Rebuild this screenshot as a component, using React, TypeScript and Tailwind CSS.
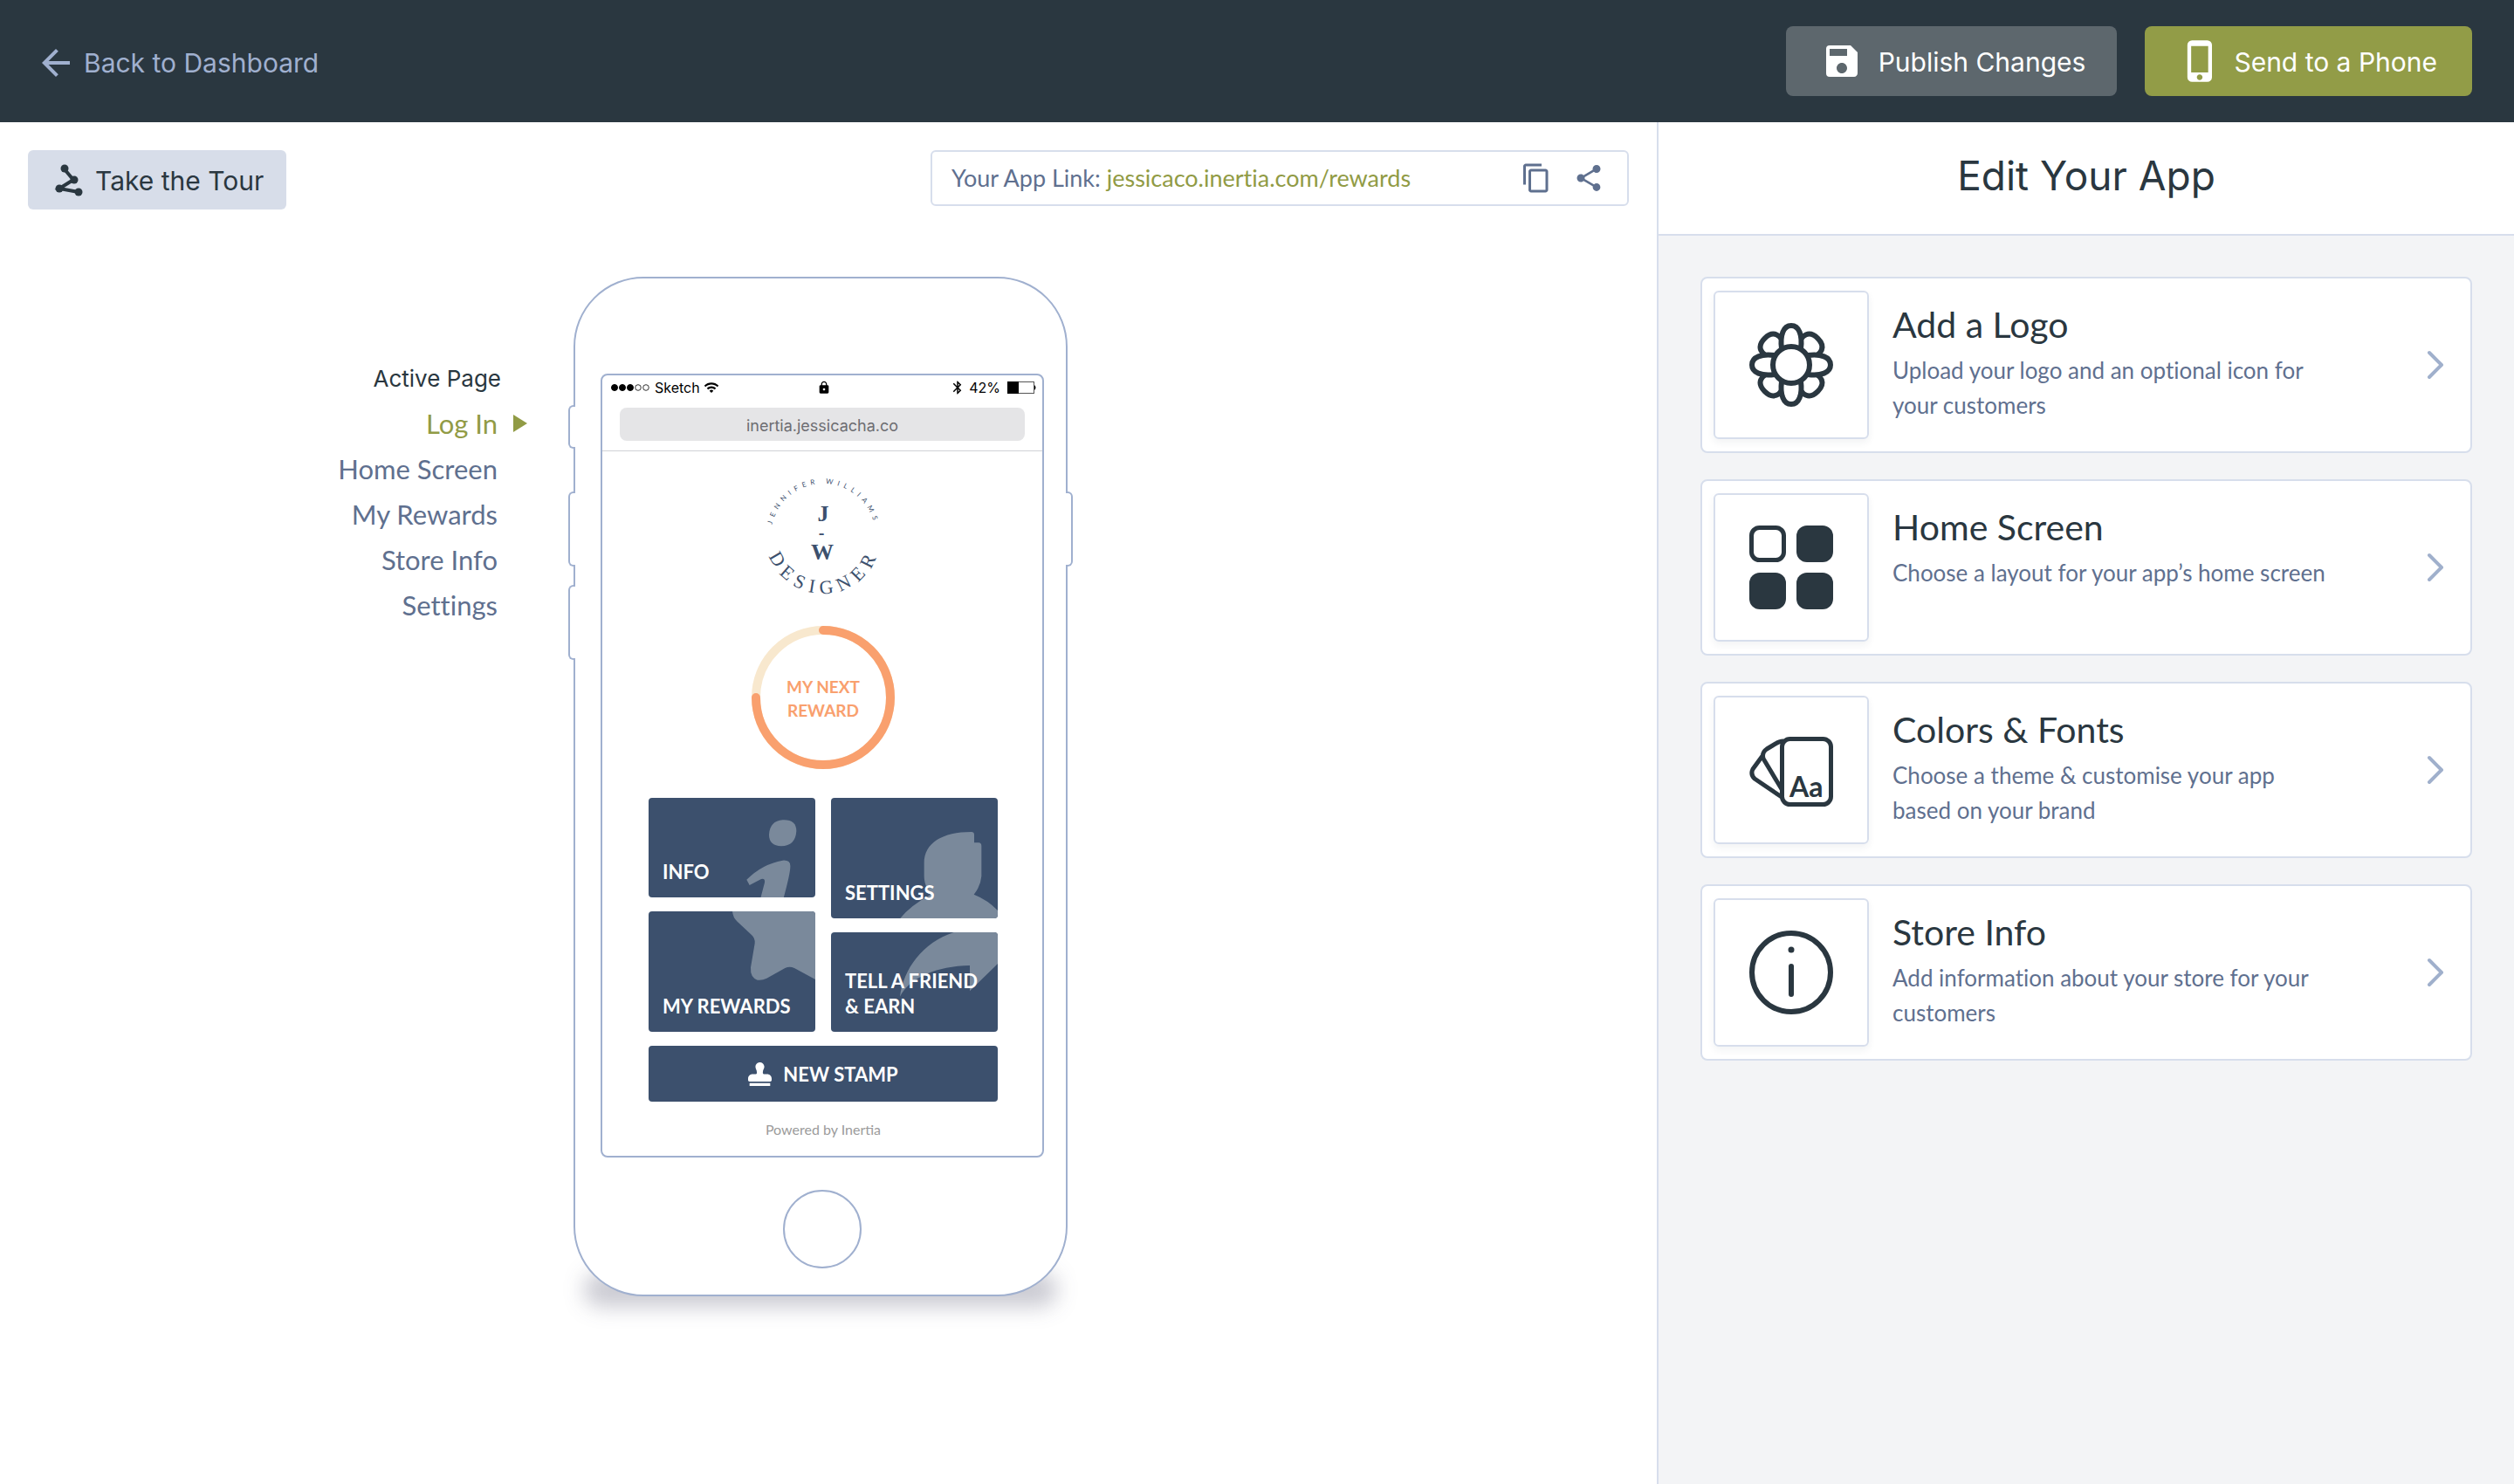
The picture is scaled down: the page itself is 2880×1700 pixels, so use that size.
import React from 'react';
import { MdArrowBack, MdSave, MdPhoneIphone, MdContentCopy, MdShare, MdLock, MdWifi, MdBluetooth } from 'react-icons/md';
import { FaStamp } from 'react-icons/fa';

const inter = "font-['Inter','Liberation_Sans',sans-serif]";
const lato = "font-['Lato','Open_Sans',sans-serif]";

function TourIcon() {
  return (
    <svg viewBox="0 0 34 38" className="h-[38px] w-[34px]" fill="#2a3740" stroke="#2a3740" aria-hidden="true">
      <path d="M12 7 L22 19 L6 29 L28 33" fill="none" strokeWidth="4" />
      <g stroke="none">
        <circle cx="12" cy="6" r="4.500" />
        <circle cx="23" cy="19" r="4.500" />
        <circle cx="6" cy="29" r="4.500" />
        <circle cx="28" cy="33" r="4.500" />
      </g>
    </svg>
  );
}

function FlowerIcon() {
  return (
    <svg viewBox="-50 -50 100 100" className="size-[100px]" fill="#fff" stroke="#2a3740" strokeWidth="6" aria-hidden="true">
      {[45, 135, 225, 315].map((a) => (
        <path key={a} d="M-10 -20 C-17 -34 -13 -43 0 -43 C13 -43 17 -34 10 -20" transform={`rotate(${a})`} />
      ))}
      {[0, 90, 180, 270].map((a) => (
        <path key={a} d="M-11 -19 C-13 -34 -9 -45 0 -45 C9 -45 13 -34 11 -19" transform={`rotate(${a})`} />
      ))}
      <circle r="21" />
    </svg>
  );
}

function LayoutIcon() {
  return (
    <svg viewBox="0 0 96 96" className="size-[96px]" fill="#2a3740" aria-hidden="true">
      <rect x="2.5" y="2.5" width="37" height="37" rx="9" fill="#fff" stroke="#2a3740" strokeWidth="5" />
      <rect x="54" width="42" height="42" rx="12" />
      <rect y="54" width="42" height="42" rx="12" />
      <rect x="54" y="54" width="42" height="42" rx="12" />
    </svg>
  );
}

function SwatchIcon() {
  return (
    <svg viewBox="0 -4 96 84" className="h-[84px] w-[96px]" fill="#fff" stroke="#2a3740" strokeWidth="5" strokeLinejoin="round" aria-hidden="true">
      <path d="M15 22 L4 37 Q1 43 6 48 L37 69" />
      <path d="M39 5 Q34 5 30 8 L20 14 Q14 18 16 25 L37 60" />
      <rect x="37.500" y="2.500" width="56" height="75" rx="9" />
      <text x="46" y="69" fontSize="32" fontWeight="700" fill="#2a3740" stroke="none" fontFamily="Lato, sans-serif">Aa</text>
    </svg>
  );
}

function InfoIcon() {
  return (
    <svg viewBox="0 0 96 96" className="size-[96px]" fill="none" stroke="#2a3740" strokeWidth="6" strokeLinecap="round" aria-hidden="true">
      <circle cx="48" cy="48" r="45" />
      <path d="M48 41 V73" />
      <circle cx="48" cy="22" r="3.500" fill="#2a3740" stroke="none" />
    </svg>
  );
}

function Chevron() {
  return (
    <svg viewBox="0 0 20 34" className="h-[34px] w-5 shrink-0" fill="none" stroke="#a0b0cc" strokeWidth="4" strokeLinecap="round" strokeLinejoin="round" aria-hidden="true">
      <path d="M3 3 L17 17 L3 31" />
    </svg>
  );
}

function BrandLogo() {
  return (
    <svg viewBox="-70 -70 140 140" className="size-[140px] overflow-visible" fill="#3c506d" role="img" aria-label="Jennifer Williams Designer">
      <defs>
        <path id="logo-top" d="M-60 0 A60 60 0 0 1 60 0" />
        <path id="logo-bottom" d="M-66 0 A66 66 0 0 0 66 0" />
      </defs>
      <text fontSize="8" letterSpacing="5" textAnchor="middle" fontFamily="Lato, sans-serif">
        <textPath href="#logo-top" startOffset="50%">JENNIFER WILLIAMS</textPath>
      </text>
      <text fontSize="22" letterSpacing="7" textAnchor="middle" fontFamily="Liberation Serif, serif">
        <textPath href="#logo-bottom" startOffset="51%">DESIGNER</textPath>
      </text>
      <text fontFamily="Liberation Serif, serif" fontWeight="700" fontSize="26" textAnchor="middle">
        <tspan x="0" y="-17">J</tspan>
        <tspan x="-2" y="3" fontSize="20">-</tspan>
        <tspan x="-1" y="27">W</tspan>
      </text>
    </svg>
  );
}

function RewardRing() {
  return (
    <div className="relative grid size-[164px] place-items-center">
      <svg viewBox="0 0 164 164" className="absolute inset-0 size-full" fill="none" strokeWidth="10" aria-hidden="true">
        <circle cx="82" cy="82" r="77" stroke="#f8e8ce" />
        <path d="M82 5 A77 77 0 1 1 5 82" stroke="#f9a06e" strokeLinecap="round" />
      </svg>
      <p className="relative pt-0.5 text-center text-[19px] leading-[27px] font-bold text-[#f9a06e]">
        MY NEXT
        <br />
        REWARD
      </p>
    </div>
  );
}

type TileProps = { label: React.ReactNode; viewBox: string; tall?: boolean; children: React.ReactNode };

function Tile({ label, viewBox, tall, children }: TileProps) {
  return (
    <button
      type="button"
      className={`relative flex w-full items-end overflow-hidden rounded bg-[#3c506d] px-4 pb-[15px] text-left text-[22px] leading-[29px] font-bold text-white ${tall ? 'h-[138px]' : 'h-[114px]'}`}
    >
      <svg viewBox={viewBox} className="absolute inset-0 size-full" fill="#7a899b" aria-hidden="true">
        {children}
      </svg>
      <span className="relative">{label}</span>
    </button>
  );
}

function StatusBar() {
  return (
    <div className={`grid grid-cols-3 items-center pt-0.5 pr-1.5 pl-[9px] text-[16px] leading-6 text-black ${inter}`}>
      <div className="flex items-center gap-1">
        <svg viewBox="0 0 47 10" className="h-[10px] w-[47px]" stroke="#000" aria-hidden="true">
          {[0, 1, 2, 3, 4].map((i) => (
            <circle key={i} cx={5 + i * 9} cy="5" r={i < 3 ? 3.5 : 3.3} fill={i < 3 ? '#000' : 'none'} strokeWidth={i < 3 ? 1 : 0.8} />
          ))}
        </svg>
        <span>Sketch</span>
        <MdWifi className="size-[18px]" />
      </div>
      <MdLock className="size-4 justify-self-center" />
      <div className="flex items-center justify-end gap-1">
        <MdBluetooth className="size-[18px]" />
        <span>42%</span>
        <svg viewBox="0 0 34 14" className="ml-1 h-[14px] w-[34px]" aria-hidden="true">
          <rect x="0.500" y="0.500" width="30" height="13" fill="none" stroke="#555" />
          <rect width="13" height="14" />
          <path d="M31 4 Q34 7 31 10 Z" />
        </svg>
      </div>
    </div>
  );
}

function SideButton({ className }: { className: string }) {
  return <span className={`absolute w-2 border-2 border-[#a0b0cf] bg-white ${className}`} />;
}

function Phone() {
  return (
    <div className="relative w-[566px] shrink-0">
      <div className="absolute inset-x-3 -bottom-3 h-10 rounded-[20px] bg-[#2a2a4a]/25 blur-[12px]" />
      <div className="relative flex flex-col items-center rounded-[80px] border-2 border-[#a0b0cf] bg-white pt-[109px] pr-[25px] pb-[30px] pl-[29px]">
        <div className={`flex h-[898px] w-full flex-col rounded-lg border-2 border-[#a0b0cf] ${lato}`}>
          <StatusBar />
          <div className={`mx-5 mt-[11px] rounded-lg bg-[#e5e5e7] pt-[3px] text-center text-[18px] leading-[35px] text-[#6d6d72] ${inter}`}>
            inertia.jessicacha.co
          </div>
          <div className="mt-[11px] border-b border-[#d0d2d6]" />
          <div className="flex flex-col items-center pt-[27px] pr-[51px] pl-[53px]">
            <BrandLogo />
            <div className="mt-[33px]">
              <RewardRing />
            </div>
            <div className="mt-[33px] grid w-full grid-cols-2 gap-x-[18px]">
              <div className="flex flex-col gap-4">
                <Tile label="INFO" viewBox="69 71 573 342">
                  <path d="M530 147 Q577 145 577 185 Q574 236 525 237 Q483 236 483 197 Q486 150 530 147 Z" />
                  <path d="M406 352 Q460 298 530 286 Q558 284 556 308 Q556 330 533 415 H454 L468 362 Q470 346 456 350 L416 371 Z" />
                </Tile>
                <Tile label="MY REWARDS" viewBox="69 462 573 414" tall>
                  <path d="M357 462 Q359 484 374 497 L423 543 Q436 555 434 572 L420 655 Q418 690 443 698 Q460 700 475 692 L538 657 Q554 650 570 657 L642 696 V462 Z" />
                </Tile>
              </div>
              <div className="flex flex-col gap-4">
                <Tile label="SETTINGS" viewBox="696 71 573 414" tall>
                  <path d="M1016 295 C1016 225 1080 188 1178 188 Q1188 188 1188 198 V225 H1203 Q1213 226 1213 236 V340 Q1210 375 1187 403 Q1235 422 1269 458 V486 H933 Q970 440 1038 404 Q1016 370 1016 340 Z" />
                </Tile>
                <Tile label={<>TELL A FRIEND<br />&amp; EARN</>} viewBox="696 534 573 342">
                  <path d="M1118 534 C1010 570 945 660 933 755 C965 690 1060 650 1173 648 V736 L1269 642 V534 Z" />
                </Tile>
              </div>
            </div>
            <button type="button" className="mt-4 flex h-16 w-full items-center justify-center gap-[13px] rounded bg-[#3c506d] text-[22px] font-bold text-white">
              <FaStamp className="size-[27px]" />
              NEW STAMP
            </button>
            <p className="mt-5 text-[16px] leading-6 text-[#9b9b9b]">Powered by Inertia</p>
          </div>
        </div>
        <div className="mt-[37px] size-[90px] rounded-full border-2 border-[#a0b0cf]" />
      </div>
      <SideButton className="top-[147px] -left-[6px] h-[50px] rounded-l-md border-r-0" />
      <SideButton className="top-[246px] -left-[6px] h-[86px] rounded-l-md border-r-0" />
      <SideButton className="top-[353px] -left-[6px] h-[86px] rounded-l-md border-r-0" />
      <SideButton className="top-[246px] -right-[6px] h-[86px] rounded-r-md border-l-0" />
    </div>
  );
}

const pages = ['Log In', 'Home Screen', 'My Rewards', 'Store Info', 'Settings'];

function PageNav() {
  return (
    <nav aria-labelledby="active-page" className="flex w-[604px] shrink-0 flex-col items-end pt-[100px]">
      <h2 id="active-page" className={`pr-[30px] text-[26px] leading-[34px] text-[#2a3740] ${inter}`}>Active Page</h2>
      <ul className={`mt-2 text-right text-[31px] leading-[52px] text-[#5f708f] [font-variant-ligatures:none] ${lato}`}>
        {pages.map((p, i) => (
          <li key={p} className="flex items-center justify-end">
            <a href="#" className={i === 0 ? 'text-[#919b45]' : ''}>{p}</a>
            <span className="ml-[18px] w-4">
              {i === 0 && (
                <svg viewBox="0 0 16 20" className="h-5 w-4" fill="#919b45" aria-hidden="true">
                  <path d="M0 0 L16 10 L0 20 Z" />
                </svg>
              )}
            </span>
          </li>
        ))}
      </ul>
    </nav>
  );
}

const cards = [
  { title: 'Add a Logo', text: 'Upload your logo and an optional icon for your customers', icon: <FlowerIcon /> },
  { title: 'Home Screen', text: 'Choose a layout for your app’s home screen', icon: <LayoutIcon /> },
  { title: 'Colors & Fonts', text: 'Choose a theme & customise your app based on your brand', icon: <SwatchIcon /> },
  { title: 'Store Info', text: 'Add information about your store for your customers', icon: <InfoIcon /> },
];

export default function App() {
  return (
    <div className={`flex min-h-screen flex-col bg-white ${inter}`}>
      <header className="flex h-[140px] items-center justify-between bg-[#2a3740] px-12 text-[30px]">
        <a href="#" className="-ml-2 flex items-center gap-2 pt-1 text-[#a0b0cf]">
          <MdArrowBack className="size-12" />
          Back to Dashboard
        </a>
        <div className="flex gap-8 text-white">
          <button type="button" className="flex h-20 items-center gap-[18px] rounded-lg bg-[#5d676d] pr-9 pl-10">
            <MdSave className="size-12" />
            <span className="pt-0.5">Publish Changes</span>
          </button>
          <button type="button" className="flex h-20 items-center gap-3 rounded-lg bg-[#929c47] pr-10 pl-[38px]">
            <MdPhoneIphone className="size-[52px]" />
            <span className="pt-0.5">Send to a Phone</span>
          </button>
        </div>
      </header>

      <div className="flex flex-1">
        <main className="flex-1">
          <div className="flex items-start justify-between px-8 pt-8">
            <button type="button" className="flex h-[68px] items-center gap-[13px] rounded-md bg-[#d7dde9] pr-[26px] pl-[30px] text-[30px] text-[#2a3740]">
              <TourIcon />
              <span className="pt-0.5">Take the Tour</span>
            </button>
            <div className={`flex h-16 w-[800px] items-center rounded-md border-2 border-[#d7deec] pr-[26px] pl-[22px] text-[27px] text-[#5f708f] [font-variant-ligatures:none] ${lato}`}>
              <p className="flex-1">
                Your App Link: <a href="#" className="text-[#919b45]">jessicaco.inertia.com/rewards</a>
              </p>
              <button type="button" aria-label="Copy link" className="mr-6">
                <MdContentCopy className="size-9" />
              </button>
              <button type="button" aria-label="Share link">
                <MdShare className="size-9" />
              </button>
            </div>
          </div>
          <div className="mt-[77px] flex items-start gap-[53px]">
            <PageNav />
            <Phone />
          </div>
        </main>

        <aside className="flex w-[982px] flex-col border-l-2 border-[#d7deec] bg-[#f3f4f6]">
          <h1 className="border-b-2 border-[#d7deec] bg-white pb-1.5 text-center text-[46px] leading-[122px] text-[#2a3740]">Edit Your App</h1>
          <ul className={`flex flex-col gap-[30px] px-12 pt-[47px] [font-variant-ligatures:none] ${lato}`}>
            {cards.map((c) => (
              <li key={c.title}>
                <button type="button" className="flex w-full items-center rounded-lg border-2 border-[#d7deec] bg-white py-3.5 pr-[30px] pl-[13px] text-left">
                  <span className="grid h-[170px] w-[178px] shrink-0 place-items-center rounded-md border-2 border-[#d7deec] shadow-[0_4px_8px_rgba(42,55,64,0.06)]">
                    {c.icon}
                  </span>
                  <span className="ml-[27px] flex flex-1 flex-col self-start pt-[13px]">
                    <span className="text-[41px] leading-[52px] text-[#2a3740]">{c.title}</span>
                    <span className="mt-1.5 max-w-[505px] text-[26px] leading-10 text-[#5f708f]">{c.text}</span>
                  </span>
                  <Chevron />
                </button>
              </li>
            ))}
          </ul>
        </aside>
      </div>
    </div>
  );
}
